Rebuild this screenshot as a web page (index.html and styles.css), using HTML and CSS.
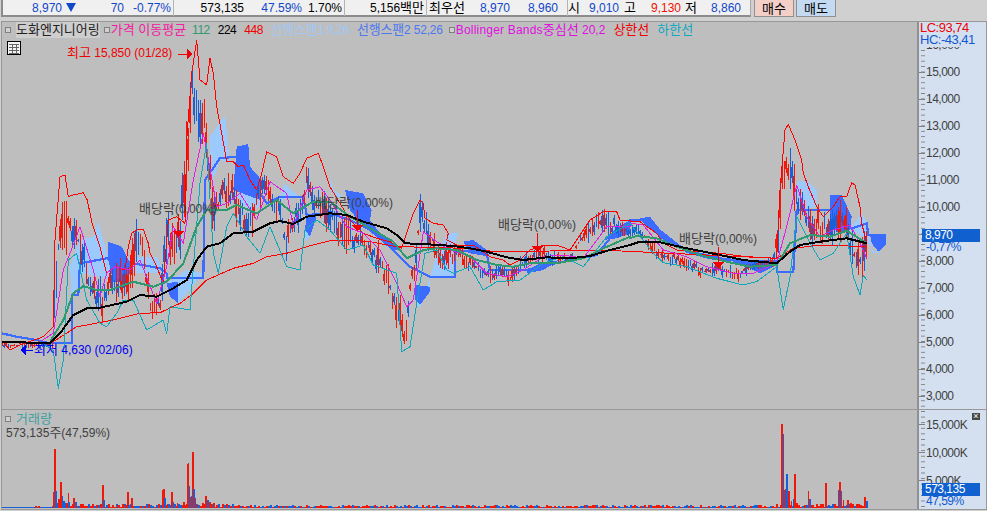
FILE: index.html
```html
<!DOCTYPE html>
<html lang="ko">
<head>
  <meta charset="UTF-8" />
  <title>도화엔지니어링 차트</title>
  <link rel="stylesheet" href="styles.css">
</head>
<body>

  <div class="topbar">
    <div class="quote">
      <span class="blue">8,970<i class="down"></i></span>
      <span class="blue">70</span>
      <span class="blue sep">-0.77%</span>
      <span>573,135</span>
      <span class="blue">47.59%</span>
      <span class="sep">1.70%</span>
      <span class="sep">5,156<b class="ko">백만</b></span>
      <span class="name ko">최우선</span>
      <span class="blue">8,970</span>
      <span class="blue sep wide">8,960</span>
      <span class="name ko">시</span>
      <span class="blue">9,010</span>
      <span class="name ko">고</span>
      <span class="red">9,130</span>
      <span class="name ko">저</span>
      <span class="blue">8,860</span>
    </div>
    <button class="btn buy ko">매수</button>
    <button class="btn sell ko">매도</button>
  </div>

  <div class="panel">
    <div class="plot price-plot">
      <svg id="price" class="canvas" viewBox="2 22 915 387" width="915" height="387"></svg>

      <div class="legend">
        <i class="box"></i><span class="title ko">도화엔지니어링</span>
        <i class="box"></i><span class="c-pink ko">가격 이동평균</span>
        <span class="c-green num">112</span>
        <span class="c-black num">224</span>
        <span class="c-red num">448</span>
        <span class="c-sky"><b class="ko">선행스팬</b>1 9,26</span>
        <span class="c-blue"><b class="ko">선행스팬</b>2 52,26</span>
        <i class="box"></i><span class="c-magenta"><em>Bollinger Bands</em><b class="ko">중심선</b> 20,2</span>
        <span class="c-red ko">상한선</span>
        <span class="c-teal ko">하한선</span>
      </div>

      <svg class="grid-icon" viewBox="0 0 14 14" width="14" height="14">
        <rect x="0.5" y="0.5" width="13" height="13" fill="#f4f4f4" stroke="#000" />
        <path d="M2 3.5H12M2 6.5H12M2 9.5H12M2 12H12M5 3.5V12M9 3.5V12" stroke="#666" fill="none" shape-rendering="crispEdges" />
      </svg>

      <div class="note hi"><b class="ko">최고</b> 15,850 (01/28)</div>
      <div class="note lo"><b class="ko">최저</b> 4,630 (02/06)</div>
      <div class="note div1"><b class="ko">배당락</b>(0,00%)</div>
      <div class="note div2"><b class="ko">배당락</b>(0,00%)</div>
      <div class="note div3"><b class="ko">배당락</b>(0,00%)</div>
      <div class="note div4"><b class="ko">배당락</b>(0,00%)</div>
    </div>

    <div class="axis price-axis">
      <div class="tick">16,000</div>
      <div class="tick">15,000</div>
      <div class="tick">14,000</div>
      <div class="tick">13,000</div>
      <div class="tick">12,000</div>
      <div class="tick">11,000</div>
      <div class="tick">10,000</div>
      <div class="tick">9,000</div>
      <div class="tick">8,000</div>
      <div class="tick">7,000</div>
      <div class="tick">6,000</div>
      <div class="tick">5,000</div>
      <div class="tick">4,000</div>
      <div class="tick">3,000</div>
      <div class="corner">
        <div class="c-red">LC:93,74</div>
        <div class="c-hc">HC:-43,41</div>
      </div>
      <div class="last price-last">8,970</div>
      <div class="rate price-rate">-0,77%</div>
    </div>

    <div class="plot vol-plot">
      <svg id="volume" class="canvas" viewBox="2 409 915 100" width="915" height="100"></svg>
      <div class="vol-title">
        <div class="vol-name"><i class="box"></i><span class="ko">거래량</span></div>
        <div class="vol-value">573,135<b class="ko">주</b>(47,59%)</div>
      </div>
    </div>

    <div class="axis vol-axis">
      <div class="tick">15,000K</div>
      <div class="tick">10,000K</div>
      <div class="tick">5,000K</div>
      <div class="close">×</div>
      <div class="last vol-last">573,135</div>
      <div class="rate vol-rate">47,59%</div>
    </div>
  </div>

  <script src="chart.js"></script>
</body>
</html>
```
FILE: styles.css
```css
* {
  margin: 0;
  padding: 0;
  box-sizing: border-box;
}

html, body {
  width: 987px;
  height: 511px;
  overflow: hidden;
}

body {
  background: #d0d0d0;
  color: #000;
  font-family: "Liberation Sans", "Noto Sans CJK KR", sans-serif;
  font-size: 12px;
}

b, em {
  font-weight: normal;
  font-style: normal;
}

.ko { font-size: 13px; }

.blue { color: #1048c8; }
.red { color: #f01000; }

.topbar {
  display: flex;
  height: 18px;
  margin-left: 1px;
}

.quote {
  display: grid;
  grid-template-columns: 73px 48px 50px 70px 58px 43px 82px 40px 43px 58px 11px 40px 22px 40px 20px 40px;
  width: 750px;
  height: 17px;
  background: #f0f0f0;
  border-left: 2px solid #8c8c8c;
  border-bottom: 2px solid #8c8c8c;
  border-right: 1px solid #a8a8a8;
  line-height: 16px;
}

.quote span {
  text-align: right;
  white-space: nowrap;
}

.quote .sep {
  border-right: 1px solid #b4b4b4;
  padding-right: 2px;
}

.quote .wide { padding-right: 9px; }

.quote .name { text-align: center; }

.down {
  display: inline-block;
  width: 0;
  height: 0;
  margin-left: 4px;
  border-left: 5px solid transparent;
  border-right: 5px solid transparent;
  border-top: 9px solid #1048c8;
}

.btn {
  width: 40px;
  height: 17px;
  margin-left: 2px;
  border: 1px solid #909090;
  border-top: none;
  font-family: inherit;
  line-height: 15px;
  color: #000;
}

.buy { background: #f4cfc8; margin-left: 3px; }
.sell { background: #c4daf2; }

.panel {
  display: grid;
  grid-template-columns: 915px 69px;
  grid-template-rows: 387px 100px;
  width: 986px;
  margin: 3px 0 0 1px;
  border: 1px solid #989898;
}

.plot {
  position: relative;
  background: #bebebe;
  overflow: hidden;
}

.canvas { display: block; }

.vol-plot { border-top: 1px solid #989898; }

.legend {
  position: absolute;
  top: 0;
  left: 3px;
  display: flex;
  align-items: center;
  gap: 8px;
  height: 16px;
  line-height: 16px;
  white-space: nowrap;
}

.box {
  display: inline-block;
  flex: none;
  width: 6px;
  height: 6px;
  border: 1px solid #808080;
  background: #d0d0d0;
}

.legend .title {
  margin: 0 -4px 0 -3px;
  background: #cecece;
  color: #222;
}

.legend .box + span:not(.title) { margin-left: -7px; }

.legend .c-pink { margin-right: -2px; }

.legend .num { letter-spacing: -0.5px; }

.legend .c-sky { letter-spacing: -0.3px; }

.legend .c-blue { letter-spacing: -0.2px; margin-right: -2px; }

.legend em { letter-spacing: 0.2px; }

.c-pink { color: #f020a0; }
.c-green { color: #2f9a70; }
.c-black { color: #000; }
.c-red { color: #f00000; }
.c-sky { color: #a0c8f8; }
.c-blue { color: #4c78f0; }
.c-magenta { color: #e010e0; }
.c-teal { color: #10a8c0; }
.c-hc { color: #1058d0; }

.grid-icon {
  position: absolute;
  left: 5px;
  top: 19px;
}

.note {
  position: absolute;
  color: #404040;
  white-space: nowrap;
  line-height: 14px;
}

.note.hi { left: 65px; top: 24px; color: #f00000; }
.note.lo { left: 32px; top: 321px; color: #0000f0; }
.note.div1 { left: 137px; top: 180px; }
.note.div2 { left: 313px; top: 174px; }
.note.div3 { left: 496px; top: 196px; }
.note.div4 { left: 677px; top: 210px; }

.axis {
  position: relative;
  background-color: #d4e0f0;
  background-image: linear-gradient(#808080 1px, transparent 1px);
  background-size: 4px 5.4px;
  background-repeat: repeat-y;
  background-position: 2px 1px;
  border-left: 2px solid #909090;
  color: #404040;
  overflow: hidden;
  letter-spacing: -0.5px;
}

.price-axis { padding-top: 10px; }

.vol-axis {
  padding-top: 1px;
  border-top: 1px solid #989898;
  background-size: 4px 5.6px;
}

.tick {
  position: relative;
  height: 27px;
  line-height: 27px;
  padding-left: 7px;
}

.vol-axis .tick { height: 28px; line-height: 28px; }

.tick::before {
  content: "";
  position: absolute;
  left: 0;
  top: 13px;
  width: 6px;
  height: 1px;
  background: #808080;
}

.corner {
  position: absolute;
  top: 0;
  left: 0;
  right: 0;
  height: 25px;
  padding-left: 1px;
  background: #d4e0f0;
  font-size: 13px;
  line-height: 12px;
}

.last {
  position: absolute;
  left: 3px;
  width: 58px;
  height: 13px;
  padding-left: 3px;
  background: #1060d0;
  color: #fff;
  line-height: 13px;
}

.rate {
  position: absolute;
  left: 7px;
  color: #1058d0;
  line-height: 11px;
}

.price-last { top: 207px; }
.price-rate { top: 220px; }
.vol-last { top: 73px; }
.vol-rate { top: 86px; }

.close {
  position: absolute;
  top: 3px;
  left: 53px;
  width: 8px;
  height: 7px;
  background: #484848;
  color: #fff;
  font-size: 9px;
  line-height: 7px;
  text-align: center;
  letter-spacing: 0;
}

.vol-title {
  position: absolute;
  top: 2px;
  left: 3px;
  line-height: 14px;
}

.vol-name {
  display: flex;
  align-items: center;
  gap: 5px;
  color: #40a0a0;
}

.vol-value {
  margin-left: 1px;
  color: #404040;
}
```
FILE: chart.js
```js
const NS = 'http://www.w3.org/2000/svg';

// points were read off crops of the chart, so each part has its own origin
function part(ox, oy, pts) {
  const out = [];
  for (let i = 0; i < pts.length; i += 2) {
    out.push((pts[i] / 3 + ox).toFixed(1) + ',' + (pts[i + 1] / 3 + oy).toFixed(1));
  }
  return out;
}

function add(svg, tag, attrs) {
  const el = document.createElementNS(NS, tag);
  for (const k in attrs) el.setAttribute(k, attrs[k]);
  svg.appendChild(el);
}

let seed = 4711;
function rnd() {
  seed = (seed * 9301 + 49297) % 233280;
  return seed / 233280;
}

const A = [0, 40];   // left crop
const B = [330, 170]; // middle crop
const C = [620, 110]; // right crop

const cloudLight = [
  [...A, [210,680,240,600,280,590,295,545,310,600,325,655,400,650,470,650,490,690,470,700,395,700,350,720,240,700,235,740,215,770]],
  [...A, [630,290,675,225,690,370,660,360,640,420,630,380]],
  [...A, [700,455,770,470,790,490,750,520,720,480]],
  [...A, [840,470,855,430,880,455,900,470,840,480]],
  [...A, [500,730,560,690,610,700,560,760,535,790]],
  [...A, [915,560,935,585,915,605]],
  [...B, [0,20,10,60,40,80,20,80,0,60]],
  [...B, [325,240,355,190,385,190,370,240,370,320,300,320]],
  [...B, [260,400,300,370,300,330,325,300,300,320,270,415]],
  [...C, [530,215,560,210,590,240,590,290,540,300]],
  [...C, [690,355,725,310,745,340,755,420,785,428,760,430,740,390]]
];

const cloudDark = [
  [...A, [325,605,365,620,395,680,380,730,340,725,325,660]],
  [...A, [710,320,745,312,750,380,785,420,780,480,700,450]],
  [...A, [500,730,535,725,535,790,510,770]],
  [...A, [920,520,950,530,930,590,915,570]],
  [...B, [45,60,100,70,125,120,120,150,150,190,175,210,210,240,190,240,130,190,100,170,60,120]],
  [...B, [255,345,300,350,300,365,270,405,255,390]],
  [...B, [400,215,430,210,470,240,480,260,420,250]],
  [...B, [590,300,630,280,690,270,640,300,590,310]],
  [...B, [820,210,860,175,900,150,900,190,860,205]],
  [...C, [60,325,90,320,130,370,200,420,270,440,310,455,370,450,470,450,470,465,420,490,380,470,300,440,200,420,130,390,70,340]],
  [...C, [630,255,665,255,695,320,690,360,650,365,630,330]],
  [...C, [750,375,797,375,797,405,775,425,755,400]]
];

const lines = [
  { color: '#3c6cff', width: 2.2, parts: [
    [...A, [5,880,50,890,110,900,150,910,215,910,215,765,235,765,240,670,320,655,480,685,500,700,500,715,610,715,615,420,660,355,710,350,800,490,840,470,910,470,920,525,990,520]],
    [...B, [0,130,60,150,120,180,190,240,240,290,300,320,375,320,375,240,470,250,480,300,590,300,650,285,800,255,860,180,900,160]],
    [...C, [30,330,70,330,130,370,200,425,270,445,350,450,470,460,470,485,520,485,530,300,640,300,695,355,740,340,745,375,797,375]]
  ]},
  { color: '#ff0000', width: 1, parts: [
    [...A, [160,905,230,860,260,855,340,840,420,820,480,818,540,790,580,760,620,720,700,685,760,670,800,650,860,640,920,620,990,602]],
    [...B, [0,210,50,210,120,215,200,230,300,232,400,235,510,246,810,240]],
    [...C, [470,445,520,415,600,405,740,410]]
  ]},
  { color: '#ff0000', width: 1, parts: [
    [...A, [10,905,30,930,60,915,130,890,160,860,165,600,180,410,195,405,205,470,220,465,250,458,262,480,275,545,300,620,320,700,345,680,375,690,385,620,395,580,410,570,430,568,445,610,450,640,470,680,490,730,505,540,530,530,555,550,560,300,575,100,590,0,600,120,620,135,630,55,640,100,650,200,665,280,680,365,700,365,715,380,730,375,750,420,770,450,785,400,800,335,830,350,850,410,880,430,900,400,920,355,955,340,970,380,990,440]],
    [...B, [30,100,60,150,100,190,140,205,180,215,215,235,240,160,250,130,270,90,280,100,285,145,310,160,340,165,355,190,350,210,380,225,430,225,480,260,520,270,540,285,570,270,600,240,640,225,680,225,720,240,780,150,820,125,860,125,870,150,900,150]],
    [...C, [30,335,60,335,110,370,130,400,170,420,240,425,300,430,380,440,470,445,480,240,495,60,505,43,525,90,545,150,550,190,565,230,590,290,610,320,640,290,660,260,680,260,695,218,705,225,720,290,725,340,740,400]]
  ]},
  { color: '#e020e0', width: 1, parts: [
    [...A, [120,905,160,880,190,690,210,640,240,560,280,690,300,770,320,700,345,680,390,690,420,660,470,790,500,680,520,560,550,610,580,420,610,280,620,330,650,500,680,490,720,460,770,540,810,425,860,460,880,560,920,450,960,440,990,480]],
    [...B, [50,170,100,190,150,240,200,340,230,410,250,390,280,185,320,215,360,240,420,260,470,310,530,320,580,300,640,260,700,255,760,265,830,170,900,170]],
    [...C, [30,340,70,345,130,420,200,440,260,470,340,490,400,490,470,460,500,350,530,225,560,320,600,380,640,360,690,345,720,400,740,445]]
  ]},
  { color: '#10a8b8', width: 1, parts: [
    [...A, [120,905,160,930,175,1045,190,960,195,860,205,660,230,640,260,780,300,850,320,860,350,820,370,780,400,780,440,870,490,840,500,880,510,800,570,810,600,430,620,310,640,640,655,700,680,560,700,520,740,590,780,640,810,560,860,680,900,690,915,570,950,540,990,570]],
    [...B, [50,240,100,225,130,285,200,310,215,545,240,530,260,400,285,250,320,240,350,300,370,310,420,290,460,360,500,335,570,330,640,280,700,260,760,290,830,200,900,160]],
    [...C, [100,430,130,458,200,470,290,505,370,525,410,515,470,470,490,600,510,500,530,320,570,400,600,450,640,430,680,370,700,500,720,555,730,495,740,510]]
  ]},
  { color: '#2f9a70', width: 2, parts: [
    [...A, [150,905,190,840,220,760,250,738,290,750,330,750,400,725,460,740,500,725,550,670,590,560,620,510,680,510,710,495,770,520,830,480,880,520,940,485,990,485]],
    [...B, [60,140,130,180,190,215,230,265,280,240,320,235,380,240,440,270,500,285,550,290,600,280,680,280,760,265,820,235,900,200]],
    [...C, [30,385,50,378,110,385,170,410,240,435,320,455,390,470,470,465,510,400,570,375,630,380,680,362,740,400]]
  ]},
  { color: '#000000', width: 2, parts: [
    [...A, [5,905,150,910,180,880,220,825,260,805,300,803,380,785,420,765,470,770,520,745,560,720,590,660,620,620,660,610,700,580,760,575,810,550,840,543,880,552,920,530,990,520]],
    [...B, [50,135,100,155,170,175,200,195,225,220,280,222,370,228,420,235,470,245,530,262,580,270,650,262,720,265,780,258,840,240,900,225]],
    [...C, [30,405,60,395,120,397,200,415,300,435,370,450,470,460,510,425,540,405,600,395,680,385,740,400]]
  ]}
];

// x, centre y, half range of the price bars
const bars = [
  2,345,4, 53,345,5, 54,300,40, 58,245,30, 62,225,35, 67,220,40, 72,230,30, 80,245,25, 88,285,25, 95,300,25,
  102,300,25, 108,285,15, 115,285,22, 125,275,25, 130,270,30, 137,240,25, 142,245,15, 150,305,25, 160,305,20,
  165,240,30, 172,240,25, 180,230,30, 186,150,50, 192,90,25, 198,120,30, 205,125,30, 211,200,35, 217,210,20,
  225,190,25, 232,195,25, 240,210,30, 250,225,20, 257,200,20, 265,180,20, 272,205,12, 280,210,15, 285,240,30,
  292,220,20, 300,215,25, 306,180,15, 313,195,20, 320,210,20, 330,210,25, 345,235,20, 360,240,15, 370,250,15,
  380,260,20, 390,285,20, 396,310,20, 400,320,30, 405,340,15, 410,290,20, 415,260,25, 420,215,25, 425,225,25,
  432,240,15, 440,260,15, 450,255,15, 460,250,10, 465,262,10, 475,265,8, 480,270,10, 490,275,10, 500,272,8,
  510,278,10, 520,265,10, 530,258,10, 540,252,12, 550,258,10, 560,258,6, 570,258,5, 580,240,8, 590,230,12,
  600,220,15, 610,225,12, 620,228,10, 630,232,8, 640,232,8, 650,245,8, 660,255,8, 670,258,8, 680,260,8,
  690,265,8, 700,270,8, 710,272,8, 720,268,10, 730,272,8, 740,275,8, 750,265,8, 760,265,6, 772,262,6, 778,240,20,
  782,180,40, 785,165,20, 790,170,25, 795,190,30, 798,200,15, 803,210,20, 810,225,25, 816,220,20, 822,230,20,
  830,225,20, 838,225,20, 843,215,30, 850,240,20, 855,260,20, 860,260,20, 864,250,25, 866,250,20
];

function drawBars(svg) {
  let i = 0;
  for (let x = 2; x <= 866; x += 2) {
    while (bars[i + 3] < x) i += 3;
    const t = (x - bars[i]) / (bars[i + 3] - bars[i]);
    const cy = bars[i + 1] + (bars[i + 4] - bars[i + 1]) * t;
    const half = bars[i + 2] + (bars[i + 5] - bars[i + 2]) * t;
    const color = rnd() < 0.5 ? '#f01808' : '#1860d8';
    const top = cy - half * rnd();
    const bot = cy + half * rnd();
    add(svg, 'line', { x1: x, x2: x, y1: top, y2: bot, stroke: color, 'stroke-width': 1 });
    if (rnd() < 0.6) {
      add(svg, 'line', { x1: x, x2: x, y1: top + (bot - top) * 0.25, y2: bot - (bot - top) * 0.25, stroke: color, 'stroke-width': 2 });
    }
  }
}

function drawPrice() {
  const svg = document.getElementById('price');
  svg.setAttribute('shape-rendering', 'crispEdges');
  cloudLight.forEach(c => add(svg, 'polygon', { points: part(c[0], c[1], c[2]).join(' '), fill: '#9ccafc' }));
  cloudDark.forEach(c => add(svg, 'polygon', { points: part(c[0], c[1], c[2]).join(' '), fill: '#3c6cff' }));

  const span = lines[0];
  add(svg, 'polyline', { points: span.parts.map(p => part(p[0], p[1], p[2]).join(' ')).join(' '), fill: 'none', stroke: span.color, 'stroke-width': span.width });

  drawBars(svg);

  lines.slice(1).forEach(l => {
    const pts = l.parts.map(p => part(p[0], p[1], p[2]).join(' ')).join(' ');
    add(svg, 'polyline', { points: pts, fill: 'none', stroke: l.color, 'stroke-width': l.width, 'stroke-linejoin': 'round' });
  });

  // dividend markers
  [[178, 218, 231], [357, 210, 225], [537, 233, 246], [718, 247, 262]].forEach(m => {
    add(svg, 'line', { x1: m[0], x2: m[0], y1: m[1], y2: m[2], stroke: '#f00000' });
    add(svg, 'polygon', { points: (m[0] - 6) + ',' + m[2] + ' ' + (m[0] + 6) + ',' + m[2] + ' ' + m[0] + ',' + (m[2] + 6), fill: '#f00000' });
  });

  // high and low arrows
  add(svg, 'line', { x1: 178, x2: 188, y1: 54, y2: 54, stroke: '#f00000' });
  add(svg, 'polygon', { points: '187,49 193,54 187,59', fill: '#f00000' });
  add(svg, 'line', { x1: 26, x2: 33, y1: 350, y2: 350, stroke: '#0000f0' });
  add(svg, 'polygon', { points: '26,345 20,350 26,355', fill: '#0000f0' });
}

// volume bars that stand out: x, top, colour
const spikes = [162,145,'r',158,272,'r',165,270,'b',172,305,'b',175,295,'r',181,243,'r',185,285,'b',190,300,'b',194,305,'b',198,305,'r',203,277,'r',205,303,'b',215,310,'r',220,292,'r',225,303,'b',307,252,'r',310,297,'b',335,313,'r',350,312,'r',375,312,'r',382,273,'r',385,312,'b',394,291,'r',486,267,'r',490,264,'r',493,291,'b',500,308,'r',514,273,'r',518,302,'b',523,308,'b',530,305,'r',549,303,'r',560,188,'r',563,186,'r',566,255,'b',570,287,'r',573,285,'b',577,153,'r',580,264,'b',584,290,'r',590,310,'b',606,307,'r',616,285,'r',622,297,'b',627,303,'r',640,305,'r'];
const spikesRight = [124,70,'r',128,100,'b',122,265,'r',132,268,'b',135,265,'r',139,218,'b',145,270,'r',152,300,'r',158,295,'b',163,220,'r',168,305,'r',203,270,'r',207,295,'b',215,312,'r',256,246,'r',260,315,'b',293,268,'b',298,244,'r',302,270,'b',308,298,'r',322,296,'r',330,305,'r',352,308,'r',373,288,'r',378,300,'b'];

function spike(svg, x, top, c) {
  add(svg, 'rect', { x: x, y: top, width: 1.5, height: 507 - top, fill: c === 'r' ? '#f01808' : '#1860d8' });
}

function drawVolume() {
  const svg = document.getElementById('volume');
  svg.setAttribute('shape-rendering', 'crispEdges');
  add(svg, 'rect', { x: 2, y: 506, width: 864, height: 1, fill: '#1860d8' });
  for (let x = 52; x < 866; x += 2) {
    const wide = (x > 60 && x < 240) || (x > 775);
    const h = 1 + rnd() * (wide ? 3.5 : 2);
    const c = rnd() < 0.55 ? 'r' : 'b';
    spike(svg, x, 507 - h, c);
  }
  spike(svg, 35, 505, 'r');
  spike(svg, 38, 505, 'r');
  for (let i = 0; i < spikes.length; i += 3) spike(svg, spikes[i] / 3, 400 + spikes[i + 1] / 3, spikes[i + 2]);
  for (let i = 0; i < spikesRight.length; i += 3) spike(svg, spikesRight[i] / 3 + 740, 400 + spikesRight[i + 1] / 3, spikesRight[i + 2]);
}

drawPrice();
drawVolume();
```
